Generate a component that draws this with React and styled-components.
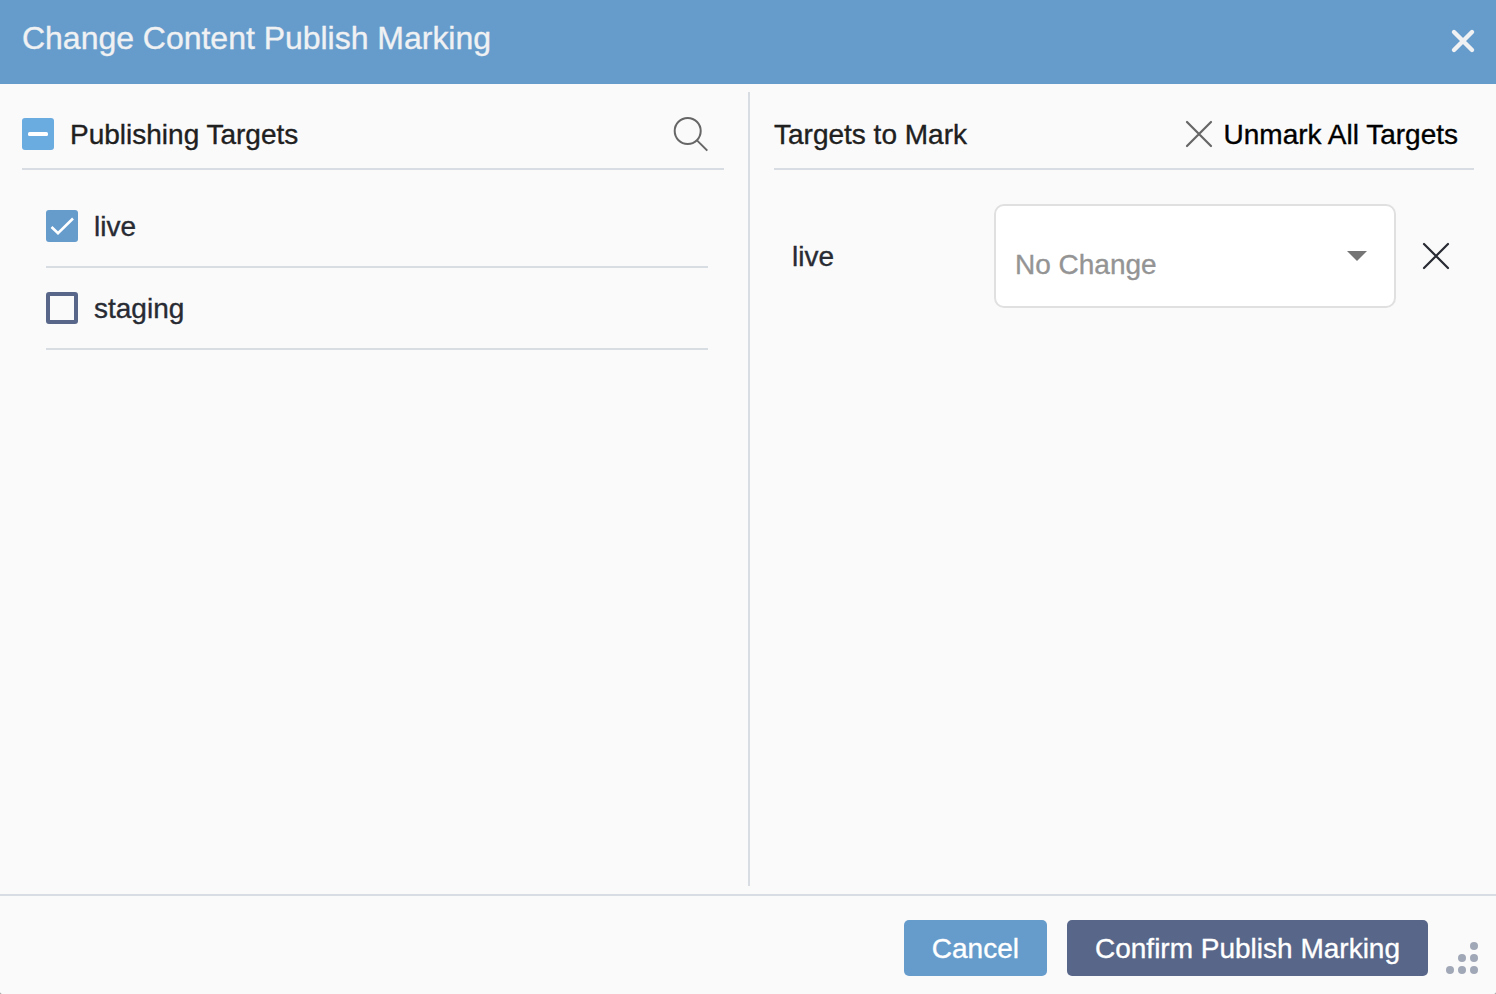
import { useState } from "react";
import styled, { createGlobalStyle } from "styled-components";

const GlobalStyle = createGlobalStyle`
    * {
      box-sizing: border-box;
    }
    body {
      margin: 0;
      background-color: #8a8a8a;
      font-family: "Liberation Sans", Arial, Helvetica, sans-serif;
      font-size: 28px;
      line-height: 32px;
      -webkit-text-stroke: 0.35px currentColor;
    }
    button {
      padding: 0;
      border: none;
      background: none;
      font: inherit;
      cursor: pointer;
    }
    svg {
      display: block;
      flex-shrink: 0;
    }
  `;

const Dialog = styled.div`
    display: flex;
    flex-direction: column;
    height: 100vh;
    overflow: hidden;
    background-color: #fafafa;
    border-radius: 0 0 2px 2px;
  `;

const Header = styled.header`
    height: 84px;
    padding: 0 20px 8px 22px;
    display: flex;
    align-items: center;
    justify-content: space-between;
    background-color: #669ccc;
    color: #f0f1f3;
  `;

const Title = styled.h1`
    margin: 0;
    font-size: 32px;
    font-weight: 400;
    line-height: 36px;
    letter-spacing: -0.02px;
  `;

const CloseButton = styled.button`
    padding-top: 5px;
    color: #f0f1f3;
  `;

const Body = styled.main`
    flex: 1;
    display: flex;
    padding: 8px 0;
  `;

const Panel = styled.section`
    width: ${(props) => props.$width}px;
    padding: 0 ${(props) => props.$right}px 0 ${(props) => props.$left}px;
  `;

const Divider = styled.div`
    width: 2px;
    background-color: #d8dce3;
  `;

const PanelHeader = styled.div`
    height: 78px;
    padding: 8px 16px 0 0;
    display: flex;
    align-items: center;
    border-bottom: 2px solid #d8dce3;
  `;

const PanelTitle = styled.h2`
    margin: 0;
    padding-top: 2px;
    flex: 1;
    font-size: 28px;
    font-weight: 400;
    color: #202020;
  `;

const Label = styled.span`
    padding-top: 2px;
    display: block;
  `;

const UnmarkButton = styled.button`
    display: flex;
    align-items: center;
    gap: 10.5px;
    color: #000;

    svg {
      color: #666;
    }
  `;

const TargetList = styled.ul`
    margin: 0;
    padding: 16px 16px 0 24px;
    list-style: none;
  `;

const TargetItem = styled.li`
    height: 82px;
    display: flex;
    align-items: center;
    border-bottom: 2px solid #d8dce3;
    color: #282b33;
  `;

const Checkbox = styled.button`
    width: 32px;
    height: 32px;
    margin-right: 16px;
    display: flex;
    align-items: center;
    justify-content: center;
    border: ${(props) => (props.$color ? "none" : "4px solid #576689")};
    border-radius: 3px;
    background-color: ${(props) => props.$color || "transparent"};
  `;

const MarkRow = styled.div`
    display: flex;
    align-items: center;
    padding: 34px 24px 0 18px;
    color: #282b33;
  `;

const MarkName = styled(Label)`
    flex: 1;
  `;

const Select = styled.div`
    width: 402px;
    height: 104px;
    padding: 16px 27px 0 19px;
    margin-right: 26px;
    display: flex;
    align-items: center;
    justify-content: space-between;
    border: 2px solid #e0e0e0;
    border-radius: 10px;
    background-color: #fff;
    color: #949494;

    svg {
      margin-bottom: 16px;
    }
  `;

const RemoveButton = styled.button`
    color: #282b33;
  `;

const Footer = styled.footer`
    height: 100px;
    padding: 24px 18px 20px 0;
    display: flex;
    align-items: flex-start;
    justify-content: flex-end;
    border-top: 2px solid #d8dce3;
  `;

const ActionButton = styled.button`
    height: 56px;
    padding: 2px 28px 0;
    margin-left: 20px;
    border-radius: 5px;
    background-color: ${(props) => props.$color};
    color: #fff;
    white-space: nowrap;
  `;

const ResizeHandle = styled.div`
    align-self: flex-end;
    margin-left: 18px;
    cursor: nwse-resize;
  `;

const CrossIcon = () => (
  <svg width="28" height="28" viewBox="0 0 28 28" fill="none" stroke="currentColor" strokeWidth="2.2" strokeLinecap="round">
    <path d="M2 2L26 26M26 2L2 26" />
  </svg>
);

const SearchIcon = () => (
  <svg width="36" height="36" viewBox="0 0 36 36" fill="none" stroke="#666" strokeWidth="2">
    <circle cx="15.7" cy="15" r="13" />
    <path d="M25 24.4L35.3 34.6" />
  </svg>
);

const TargetCheckbox = ({ name, checked, onClick }) => (
  <Checkbox role="checkbox" aria-checked={checked} aria-label={name} $color={checked && "#669ccc"} onClick={onClick}>
    {checked && (
      <svg width="32" height="32" viewBox="0 0 32 32" fill="none" stroke="#fff" strokeWidth="2.6">
        <path d="M5.5 17L12 23.3L27 8.5" />
      </svg>
    )}
  </Checkbox>
);

const targets = ["live", "staging"];

const App = () => {
  const [marked, setMarked] = useState(["live"]);

  const toggle = (name) => {
    setMarked(marked.includes(name) ? marked.filter((item) => item !== name) : [...marked, name]);
  };

  return (
    <>
      <GlobalStyle />
      <Dialog role="dialog">
        <Header>
          <Title>Change Content Publish Marking</Title>
          <CloseButton aria-label="Close">
            <svg width="26" height="26" viewBox="0 0 26 26" fill="none" stroke="currentColor" strokeWidth="4.4" strokeLinecap="round">
              <path d="M4 4L22 22M22 4L4 22" />
            </svg>
          </CloseButton>
        </Header>
        <Body>
          <Panel $width={748} $left={22} $right={24}>
            <PanelHeader>
              <Checkbox aria-label="All targets" $color="#6aabe0" onClick={() => setMarked(targets)}>
                <svg width="32" height="32" viewBox="0 0 32 32">
                  <rect x="6" y="14" width="20" height="4" rx="1.5" fill="#fff" />
                </svg>
              </Checkbox>
              <PanelTitle>Publishing Targets</PanelTitle>
              <SearchIcon />
            </PanelHeader>
            <TargetList>
              {targets.map((name) => (
                <TargetItem key={name}>
                  <TargetCheckbox name={name} checked={marked.includes(name)} onClick={() => toggle(name)} />
                  <Label>{name}</Label>
                </TargetItem>
              ))}
            </TargetList>
          </Panel>
          <Divider />
          <Panel $width={746} $left={24} $right={22}>
            <PanelHeader>
              <PanelTitle>Targets to Mark</PanelTitle>
              <UnmarkButton onClick={() => setMarked([])}>
                <CrossIcon />
                <Label>Unmark All Targets</Label>
              </UnmarkButton>
            </PanelHeader>
            {marked.map((name) => (
              <MarkRow key={name}>
                <MarkName>{name}</MarkName>
                <Select>
                  <Label>No Change</Label>
                  <svg width="20" height="10" viewBox="0 0 20 10">
                    <path d="M0 0H20L10 10Z" fill="#757575" />
                  </svg>
                </Select>
                <RemoveButton aria-label="Remove" onClick={() => toggle(name)}>
                  <CrossIcon />
                </RemoveButton>
              </MarkRow>
            ))}
          </Panel>
        </Body>
        <Footer>
          <ActionButton $color="#669ccc">Cancel</ActionButton>
          <ActionButton $color="#576689">Confirm Publish Marking</ActionButton>
          <ResizeHandle>
            <svg width="32" height="32" viewBox="0 0 32 32" fill="#a0a7b6">
              <circle cx="28" cy="4" r="4" />
              <circle cx="16" cy="16" r="4" />
              <circle cx="28" cy="16" r="4" />
              <circle cx="4" cy="28" r="4" />
              <circle cx="16" cy="28" r="4" />
              <circle cx="28" cy="28" r="4" />
            </svg>
          </ResizeHandle>
        </Footer>
      </Dialog>
    </>
  );
};

export default App;
